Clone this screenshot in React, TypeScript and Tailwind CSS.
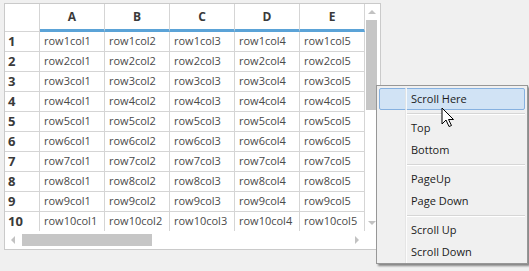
import React from "react";

const cols = ["A", "B", "C", "D", "E"];
const rows = [1, 2, 3, 4, 5, 6, 7, 8, 9, 10];

function Cursor() {
  return (
    <svg
      className="absolute left-[441px] top-[107px]"
      width="14"
      height="21"
      viewBox="0 0 14 21"
    >
      <path
        d="M1 1 L1 17 L5 13 L8 19.5 L10.5 18.5 L7.5 12.5 L12.5 12.5 Z"
        fill="#fff"
        stroke="#000"
        strokeWidth="1"
        strokeLinejoin="miter"
      />
    </svg>
  );
}

function MenuItem({ label, active }: { label: string; active?: boolean }) {
  return (
    <div
      className={
        "h-[22px] flex items-center rounded-[2px] border " +
        (active ? "bg-[#d1e3f5] border-[#86b1e0]" : "border-transparent")
      }
    >
      <span className="pl-[31px] text-[11px] text-[#1b1b1b]">{label}</span>
    </div>
  );
}

function Sep() {
  return (
    <div className="h-[7px] flex flex-col justify-center pl-[28px]">
      <div className="h-px bg-[#d6d6d6]" />
      <div className="h-px bg-white" />
    </div>
  );
}

function ContextMenu() {
  return (
    <div className="absolute left-[376px] top-[85px] w-[152px] bg-[#f0f0f0] border border-[#979797] shadow-[2px_2px_2px_rgba(0,0,0,0.45)] pt-[2px] px-[2px]">
      <div className="relative">
        <MenuItem label="Scroll Here" active />
        <Sep />
        <MenuItem label="Top" />
        <MenuItem label="Bottom" />
        <Sep />
        <MenuItem label="PageUp" />
        <MenuItem label="Page Down" />
        <Sep />
        <MenuItem label="Scroll Up" />
        <MenuItem label="Scroll Down" />
      </div>
      {/* gutter line */}
      <div className="absolute left-[28px] top-[2px] bottom-0 w-px bg-[#e2e2e2] opacity-80" />
      <div className="absolute left-[29px] top-[2px] bottom-0 w-px bg-white opacity-80" />
    </div>
  );
}

export default function App() {
  return (
    <div className="w-[529px] h-[271px] bg-[#f0f0f0] relative overflow-hidden font-['Open_Sans',sans-serif]">
      <div className="pt-[3px] pl-[4px]">
        <div className="w-[377px] h-[247px] border border-[#cacaca] bg-white flex flex-col">
          <div className="flex h-[227px]">
            {/* grid */}
            <div className="w-[360px] flex flex-col">
              <div className="flex h-[28px]">
                <div className="w-[35px] border-r border-b border-[#d5d5d5]" />
                {cols.map((c) => (
                  <div
                    key={c}
                    className="w-[65px] flex items-center justify-center border-r border-[#d5d5d5] border-b-[3px] border-b-[#5ba3d7] text-[12px] font-bold text-[#3a3a3a]"
                  >
                    {c}
                  </div>
                ))}
              </div>
              <div className="h-[199px] overflow-hidden">
                {rows.map((r) => (
                  <div key={r} className="flex h-[20px]">
                    <div className="w-[35px] border-r border-b border-[#d5d5d5] pl-[3px] flex items-center text-[13px] font-bold text-[#3a3a3a]">
                      {r}
                    </div>
                    {cols.map((c, i) => (
                      <div
                        key={c}
                        className="w-[65px] border-r border-b border-[#d5d5d5] pl-[4px] flex items-center text-[11px] text-[#4a4a4a] whitespace-nowrap"
                      >
                        row{r}col{i + 1}
                      </div>
                    ))}
                  </div>
                ))}
              </div>
            </div>
            {/* vertical scrollbar */}
            <div className="w-[15px] flex flex-col">
              <div className="h-[16px] flex items-center justify-center pr-[2px]">
                <div className="w-0 h-0 border-l-[4px] border-r-[4px] border-b-[4px] border-l-transparent border-r-transparent border-b-[#c2c2c2]" />
              </div>
              <div className="flex-1 pl-px pr-[3px]">
                <div className="h-[90px] bg-[#c6c6c6]" />
              </div>
              <div className="h-[16px] flex items-center justify-center pr-[2px]">
                <div className="w-0 h-0 border-l-[4px] border-r-[4px] border-t-[4px] border-l-transparent border-r-transparent border-t-[#c2c2c2]" />
              </div>
            </div>
          </div>
          {/* horizontal scrollbar */}
          <div className="flex h-[18px] items-center">
            <div className="w-[16px] flex items-center justify-center">
              <div className="w-0 h-0 border-t-[4px] border-b-[4px] border-r-[4px] border-t-transparent border-b-transparent border-r-[#c2c2c2]" />
            </div>
            <div className="w-[328px] pl-px">
              <div className="w-[130px] h-[12px] bg-[#c6c6c6]" />
            </div>
            <div className="w-[16px] flex items-center justify-center">
              <div className="w-0 h-0 border-t-[4px] border-b-[4px] border-l-[4px] border-t-transparent border-b-transparent border-l-[#c2c2c2]" />
            </div>
          </div>
        </div>
      </div>
      <ContextMenu />
      <Cursor />
    </div>
  );
}
